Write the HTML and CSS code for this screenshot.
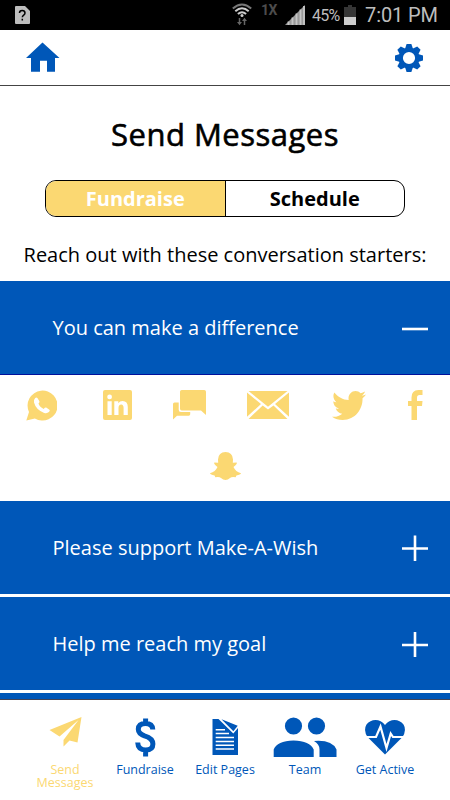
FILE: index.html
```html
<!DOCTYPE html>
<html lang="en">
<head>
<meta charset="utf-8">
<title>Send Messages</title>
<link rel="stylesheet" href="styles.css">
</head>
<body>
<div class="status">
  <svg class="sim" width="15" height="18" viewBox="0 0 15 18"><path d="M1 0h9l5 5v12q0 1-1 1H1q-1 0-1-1V1q0-1 1-1z" fill="#bdbdbd"/><path d="M4.500 7q0-2.400 2.700-2.400T10 7q0 1.200-1.300 2.100T7.300 11.300M7.300 12.700v1.900" fill="none" stroke="#000" stroke-width="1.500"/></svg>
  <svg class="wifi" width="20" height="24" viewBox="0 0 20 24" fill="none"><path d="M.8 5.500Q10-2.500 19.200 5.500" stroke="#777" stroke-width="2"/><path d="M3.300 8.300Q10 2.300 16.700 8.300M5.900 11Q10 7.400 14.100 11" stroke="#ccc" stroke-width="2"/><circle cx="10" cy="12.600" r="1.500" fill="#ccc"/><path d="M7.500 15v5M12.500 22v-5" stroke="#666" stroke-width="1.500"/><path d="M5 19h5l-2.500 3.300zM10 18h5l-2.500-3.300z" fill="#666"/></svg>
  <span class="net">1X</span>
  <svg class="signal" width="20" height="20" viewBox="0 0 20 20"><path d="M0 20L20 0v20z" fill="#999"/><path d="M3.500 20v-3.500M7.500 20V12.500M11.500 20V8.500M15.500 20V4.500M19 20V1" stroke="#c5c5c5" stroke-width="1.800"/></svg>
  <span class="pct">45%</span>
  <svg class="battery" width="12" height="20" viewBox="0 0 12 20"><path d="M0 2h4V0h4v2h4v10H0z" fill="#363636"/><path d="M0 12h12v8H0z" fill="#ccc"/></svg>
  <span class="clock">7:01 PM</span>
</div>
<header class="bar">
  <svg class="home" width="34" height="30" viewBox="0 0 34 30" fill="#0057b8"><path d="M16.500.5L33.500 16H29v13.800h-8V18.800h-7v11H5V16H0z"/></svg>
  <svg width="28" height="28" viewBox="-14 -14 28 28" fill="#0057b8"><defs><path id="tooth" d="M-4-9L-2.400-14h4.800L4-9z"/></defs><circle r="8.200" fill="none" stroke="#0057b8" stroke-width="4.200"/><use href="#tooth"/><use href="#tooth" transform="rotate(45)"/><use href="#tooth" transform="rotate(90)"/><use href="#tooth" transform="rotate(135)"/><use href="#tooth" transform="rotate(180)"/><use href="#tooth" transform="rotate(225)"/><use href="#tooth" transform="rotate(270)"/><use href="#tooth" transform="rotate(315)"/></svg>
</header>
<main>
  <h1>Send Messages</h1>
  <div class="tabs"><span class="tab on">Fundraise</span><span class="tab">Schedule</span></div>
  <p class="lead">Reach out with these conversation starters:</p>
  <section class="row first"><span>You can make a difference</span><svg width="26" height="26" viewBox="0 0 26 26"><path d="M0 14h26" stroke="#fff" stroke-width="2.600"/></svg></section>
  <div class="share">
    <svg class="whatsapp" width="31" height="31" viewBox="0 0 31 31"><path d="M.3 30.500L3 22A15 15 0 1 1 8.900 28.500z"/><path d="M9.200 7.900q1.400-1 2.200.2l2 3.200q.5.900-.9 2.300.8 3.200 5.200 5.300 1.500-1.800 2.500-1.300l3.200 2.200q1.100.9-.5 2.300-2 1.700-4.700.8Q10 19.900 8 12.500 7.500 9.500 9.200 7.900z" fill="#fff"/></svg>
    <svg class="linkedin" width="29" height="30" viewBox="0 0 29 30"><rect width="29" height="30" rx="2"/><path d="M4.500 11.300h4.200V25H4.500zM11.300 11.300h4v1.900q1.400-2.300 4.200-2.300 5.300 0 5.300 6.100v8h-4.200v-7q0-3.500-2.400-3.500-2.700 0-2.700 3.500v7h-4.200z" fill="#fff"/><circle cx="6.600" cy="6.900" r="2.400" fill="#fff"/></svg>
    <svg class="chat" width="33" height="30" viewBox="0 0 33 30"><path d="M8.800 0h22.400q1.800 0 1.800 1.800V25l-5-4.500H8.800Q7 20.500 7 18.700V1.800Q7 0 8.800 0zM1.500 12.500h4.200v7.300q0 2.200 2.300 2.200h9.200v2.300q0 1.400-1.400 1.400H4L0 29.500V14q0-1.500 1.500-1.500z"/></svg>
    <svg class="mail" width="42" height="28" viewBox="0 0 42 28"><path d="M1.500 0h39L21 15.800zM0 1.500L14 13 0 25.800zM42 1.500v24.300L28 13zM15.700 14.500L21 18.500l5.500-4L40.500 28h-39z"/></svg>
    <svg class="twitter" width="34" height="29" viewBox="0 2.200 24 19.600" preserveAspectRatio="none"><path d="M23.954 4.569c-.885.389-1.830.654-2.825.775 1.014-.611 1.794-1.574 2.163-2.723-.951.555-2.005.959-3.127 1.184-.896-.959-2.173-1.559-3.591-1.559-2.717 0-4.920 2.203-4.920 4.917 0 .390.045.765.127 1.124C7.691 8.094 4.066 6.130 1.640 3.161c-.427.722-.666 1.561-.666 2.475 0 1.710.870 3.213 2.188 4.096-.807-.026-1.566-.248-2.228-.616v.061c0 2.385 1.693 4.374 3.946 4.827-.413.111-.849.171-1.296.171-.314 0-.615-.030-.916-.086.631 1.953 2.445 3.377 4.604 3.417-1.680 1.319-3.809 2.105-6.102 2.105-.390 0-.779-.023-1.170-.067 2.189 1.394 4.768 2.209 7.557 2.209 9.054 0 13.999-7.496 13.999-13.986 0-.209 0-.420-.015-.630.961-.689 1.800-1.560 2.460-2.548z"/></svg>
    <svg class="facebook" width="15" height="30" viewBox="0 0 15 30"><path d="M3.500 30V16H0v-5h3.500V7.500Q3.500 0 10.500 0H14.500v5h-3Q9 5 9 7.700V11h5.500l-.5 5H9v14z"/></svg>
  </div>
  <div class="share2"><svg width="31" height="28" viewBox="0 0 31 28"><path d="M15.500 0Q22.500 0 23 7.500l-.2 3.300 3.900-.2q1 1.300-3.200 4.300Q25.500 19.500 31 21.200q-.3 1.600-4.600 2.200l-.7 1.800q-3.900-.8-5.700.7-2 2.100-4.500 2.100t-4.500-2.100q-1.800-1.500-5.700-.7l-.7-1.800Q.3 22.800 0 21.200q5.500-1.700 7.500-6.300Q3.300 11.900 4.300 10.600l3.900.2L8 7.500Q8.500 0 15.500 0z"/></svg></div>
  <section class="row"><span>Please support Make-A-Wish</span><svg width="26" height="26" viewBox="0 0 26 26"><path d="M0 13.500h26M13 .5v26" stroke="#fff" stroke-width="2.600"/></svg></section>
  <section class="row"><span>Help me reach my goal</span><svg width="26" height="26" viewBox="0 0 26 26"><path d="M0 14h26M13 1v25" stroke="#fff" stroke-width="2.600"/></svg></section>
  <section class="row last"></section>
</main>
<nav>
  <div class="item on"><div class="ico"><svg width="64" height="46" viewBox="0 0 64 46"><path d="M48.500 4L44.500 29.500 36.500 27.500 30.500 33.500V27L45.500 7 26.500 23.500 16.500 17z"/></svg></div><span>Send<br>Messages</span></div>
  <div class="item"><div class="ico"><svg width="64" height="46" viewBox="0 0 64 46"><path d="M39.800 16.500Q39.500 10.500 32.500 10.500T25.300 16.200Q25.300 20.500 31.500 22.800 39.900 25.200 39.900 31 39.900 37 32.700 37 25 37 24.700 29.500M32.600 5.500v6M32.600 36.500v7" fill="none" stroke="#0057b8" stroke-width="5"/></svg></div><span>Fundraise</span></div>
  <div class="item"><div class="ico"><svg width="64" height="46" viewBox="0 0 64 46"><path d="M19.500 6h6l14.800 14.500L45 15v27H19.500z"/><path d="M28.500 6.300l16.200 6.500-4.300 5.400z"/><path d="M22.700 16.700H32M22.700 20.600H36M22.700 24.500H41M22.700 28.400H41M22.700 32.200H41M22.700 36H41" stroke="#fff" stroke-width="1.500"/></svg></div><span>Edit Pages</span></div>
  <div class="item"><div class="ico"><svg width="64" height="46" viewBox="0 0 64 46"><circle cx="20.500" cy="13" r="8.600"/><circle cx="43.500" cy="13" r="8.600"/><path d="M.7 44v-7.500Q4 28 20.500 27.500 37 28 40.700 36.500V44zM41 28Q59 26.500 63.500 36.500V44h-17v-7.500Q46.500 31 41 28z"/></svg></div><span>Team</span></div>
  <div class="item"><div class="ico"><svg width="64" height="46" viewBox="0 0 64 46"><path d="M32 41.500L14.500 24Q10 17 13.500 11.500 17 7 22.500 7 28 7 32 12 36 7 41.500 7 47 7 50.500 11.500 54 17 49.500 24z"/><path d="M12 24h11l4.500-10.500 6 21.500 4.200-14.500L40 24h12" fill="none" stroke="#fff" stroke-width="2.200"/></svg></div><span>Get Active</span></div>
</nav>
</body>
</html>
```
FILE: styles.css
```css
* { box-sizing: border-box; }
body { margin: 0; width: 450px; height: 800px; overflow: hidden; background: #fff; color: #000; font-family: "Open Sans", sans-serif; display: flex; flex-direction: column; }
svg { display: block; flex: none; }
.status { height: 30px; flex: none; background: #000; color: #bdbdbd; display: flex; align-items: flex-start; padding-left: 15px; font-family: Roboto, sans-serif; white-space: nowrap; }
.sim { margin-top: 6px; }
.wifi { margin: 3px 0 0 202px; }
.net { width: 24px; margin: 2px 0 0 9px; font-size: 14px; line-height: 17px; font-weight: 700; letter-spacing: -.5px; color: #4c4c4c; }
.signal { margin-top: 5px; }
.pct { width: 32px; margin: 6px 0 0 7px; font-size: 16px; line-height: 20px; letter-spacing: -.8px; }
.battery { margin-top: 5px; }
.clock { margin: 3px 0 0 9px; font-size: 20px; line-height: 25px; letter-spacing: -.1px; }
.bar { height: 56px; flex: none; border-bottom: 1px solid #444; display: flex; align-items: center; justify-content: space-between; padding: 0 27px 0 26px; }
.home { margin-bottom: 2px; }
main { height: 613px; flex: none; overflow: hidden; }
h1 { margin: 28px 0 0; height: 40px; line-height: 40px; font-size: 31px; font-weight: 400; letter-spacing: .5px; -webkit-text-stroke: .6px #000; text-align: center; }
.tabs { display: flex; width: 360px; height: 37px; margin: 26px auto 0; border: 1px solid #000; border-radius: 11px; overflow: hidden; }
.tab { flex: 1; text-align: center; font-size: 20px; line-height: 35px; font-weight: 700; }
.tab.on { background: #fbd872; color: #fff; border-right: 1px solid #000; }
.lead { margin: 24px 0 0; height: 28px; line-height: 28px; font-size: 20px; text-align: center; white-space: nowrap; }
.row { height: 93px; margin-bottom: 3px; padding: 0 22px 0 52.500px; background: #0057b8; color: #fff; display: flex; align-items: center; justify-content: space-between; font-size: 20px; }
.row.first { height: 94px; margin: 12px 0 0; border-bottom: 1px solid #00109b; }
.row.last { margin: 0; }
.share { height: 60px; padding-left: 26px; display: flex; align-items: center; fill: #fbd872; }
.linkedin { margin-left: 46px; }
.chat, .mail { margin-left: 41px; }
.twitter { margin-left: 43px; }
.facebook { margin-left: 42px; }
.share2 { height: 66px; padding-top: 17px; display: flex; justify-content: center; fill: #fbd872; }
nav { flex: 1; border-top: 1px solid #445; display: grid; grid-template-columns: repeat(5, 80px); justify-content: center; padding-top: 13px; background: #fff; fill: #0057b8; color: #0057b8; }
.item { display: flex; flex-direction: column; align-items: center; font-size: 12.500px; line-height: 13px; text-align: center; }
.item.on { color: #fbd872; fill: #fbd872; }
.item span { margin-top: 4px; }
```
